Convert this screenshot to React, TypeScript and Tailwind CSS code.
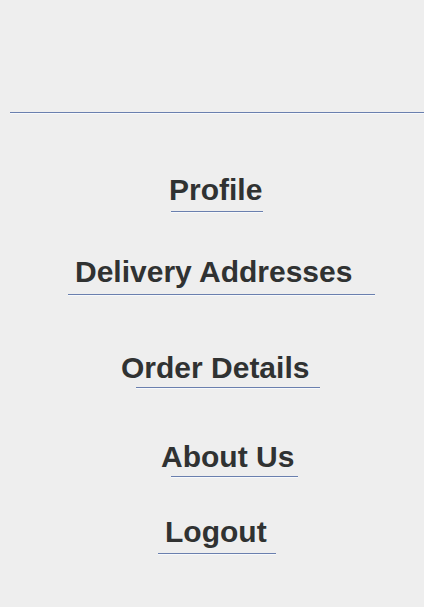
type Item = { label: string; href: string; text: string; rule: string };

const items: Item[] = [
  { label: "Profile", href: "#profile", text: "h-[39px] pl-[169px]", rule: "ml-[171px] w-[92px] mb-[42px]" },
  { label: "Delivery Addresses", href: "#addresses", text: "h-[40px] pl-[75px]", rule: "ml-[68px] w-[307px] mb-[55px]" },
  { label: "Order Details", href: "#orders", text: "h-[37px] pl-[121px]", rule: "ml-[136px] w-[184px] mb-[51px]" },
  { label: "About Us", href: "#about", text: "h-[37px] pl-[161px]", rule: "ml-[171px] w-[127px] mb-[37px]" },
  { label: "Logout", href: "#logout", text: "h-[39px] pl-[165px]", rule: "ml-[158px] w-[118px]" },
];

const ruleStyle = "border-[#6a7fae] shadow-[0_1px_0_#f7f9fb]";

export default function App() {
  return (
    <div className="min-h-screen overflow-x-hidden bg-[#eeeeee] pt-28 font-['Liberation_Sans',Arial,sans-serif] text-[#303232]">
      <hr className={`ml-2.5 ${ruleStyle}`} />
      <nav className="pt-[59px]">
        <ul>
          {items.map((item) => (
            <li key={item.label}>
              <a href={item.href} className={`block whitespace-nowrap text-[30px] leading-9 font-bold ${item.text}`}>
                {item.label}
              </a>
              <hr className={`${ruleStyle} ${item.rule}`} />
            </li>
          ))}
        </ul>
      </nav>
    </div>
  );
}
